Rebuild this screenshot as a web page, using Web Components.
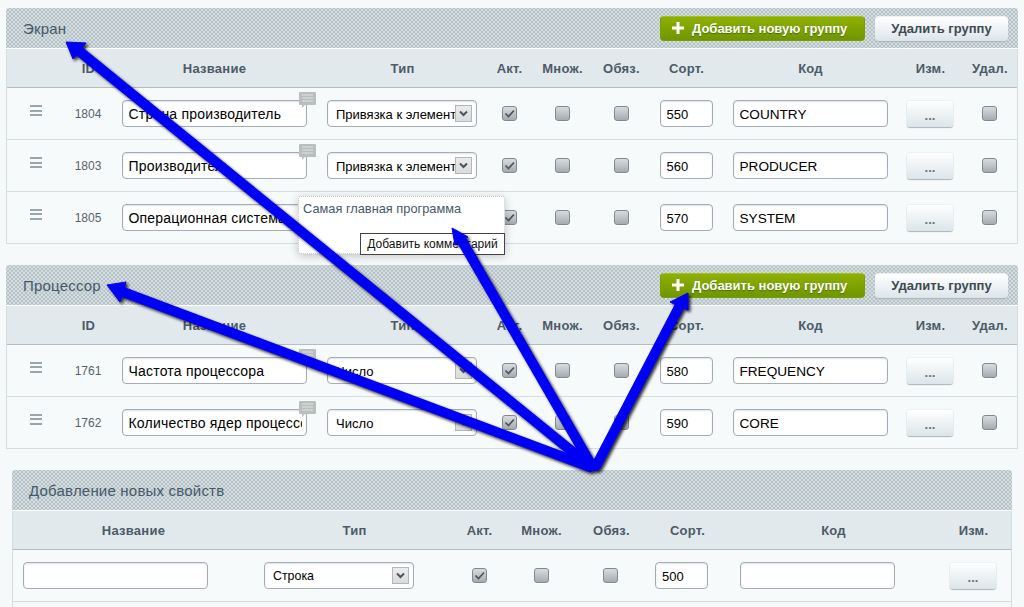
<!DOCTYPE html>
<html lang="ru"><head><meta charset="utf-8"><title>Свойства</title>
<style>
html,body{margin:0;height:607px;overflow:hidden;background:#f5f9fa;font-family:"Liberation Sans",Arial,sans-serif}
body{position:relative;padding:8px 6px 0;box-sizing:border-box;
--c1:58px 46px 206px 170px 44px 62px 56px 74px 174px 66px 53px;
--c2:205px 242px 38px 86px 52px 91px 180px 104px;
--h2:240px 202px 48px 76px 64px 88px 204px 76px}
</style></head><body>
<prop-group title-text="Экран" style="--cols:var(--c1)">
  <prop-btn slot="actions" kind="add">Добавить новую группу</prop-btn>
  <prop-btn slot="actions">Удалить группу</prop-btn>
  <prop-head><span></span><span>ID</span><span>Название</span><span>Тип</span><span>Акт.</span><span>Множ.</span><span>Обяз.</span><span>Сорт.</span><span>Код</span><span>Изм.</span><span>Удал.</span></prop-head>
  <prop-row id-text="1804" name="Страна производитель" type="Привязка к элементам" active sort="550" code="COUNTRY"></prop-row>
  <prop-row id-text="1803" name="Производитель" type="Привязка к элементам" active sort="560" code="PRODUCER"></prop-row>
  <prop-row id-text="1805" name="Операционная система" type="" active sort="570" code="SYSTEM" popup></prop-row>
</prop-group>
<prop-group title-text="Процессор" style="--cols:var(--c1)">
  <prop-btn slot="actions" kind="add">Добавить новую группу</prop-btn>
  <prop-btn slot="actions">Удалить группу</prop-btn>
  <prop-head><span></span><span>ID</span><span>Название</span><span>Тип</span><span>Акт.</span><span>Множ.</span><span>Обяз.</span><span>Сорт.</span><span>Код</span><span>Изм.</span><span>Удал.</span></prop-head>
  <prop-row id-text="1761" name="Частота процессора" type="Число" active sort="580" code="FREQUENCY"></prop-row>
  <prop-row id-text="1762" name="Количество ядер процессора" type="Число" active sort="590" code="CORE"></prop-row>
</prop-group>
<prop-group title-text="Добавление новых свойств" style="--cols:var(--c2);margin:0 6px">
  <prop-head style="--cols:var(--h2)"><span>Название</span><span>Тип</span><span>Акт.</span><span>Множ.</span><span>Обяз.</span><span>Сорт.</span><span>Код</span><span>Изм.</span></prop-head>
  <prop-row new type="Строка" active sort="500" style="--sel:12.4px"></prop-row>
  <prop-row new blank></prop-row>
</prop-group>
<prop-arrows></prop-arrows>
<script>
const def=(n,html,init)=>customElements.define(n,class extends HTMLElement{
  connectedCallback(){if(this.shadowRoot)return;const r=this.attachShadow({mode:'open'});r.innerHTML=typeof html==='function'?html(this):html;init&&init(r,this);}
});
const esc=s=>String(s||'').replace(/&/g,'&amp;').replace(/"/g,'&quot;').replace(/</g,'&lt;');
def('prop-group',h=>`<style>
:host{display:block;margin-bottom:21px;position:relative}
:host(:last-of-type){margin-bottom:0}
.top{height:40px;display:flex;align-items:center;justify-content:space-between;padding:0 10px 0 17px;border-radius:3px 3px 0 0;
background-color:#d3dcdf;background-image:radial-gradient(circle,#b8c3c8 .8px,transparent 1.1px),radial-gradient(circle,#b8c3c8 .8px,transparent 1.1px);background-size:4px 4px;background-position:0 0,2px 2px;border-bottom:1px solid #fff;
font:15px "Liberation Sans",Arial,sans-serif;letter-spacing:.2px;color:#46596a}
.top span{padding-top:1px}
.act{display:flex;gap:10px;letter-spacing:0}
.body{border:solid #d5dde0;border-width:0 1px}
</style><div class="top"><span>${esc(h.getAttribute('title-text'))}</span><div class="act"><slot name="actions"></slot></div></div><div class="body"><slot></slot></div>`);
def('prop-head',`<style>
:host{display:grid;grid-template-columns:var(--cols);height:38px;align-items:center;text-align:center;background:#e2e9ec;border-bottom:1px solid #b4bdc2;
font:bold 13px "Liberation Sans",Arial,sans-serif;letter-spacing:.25px;color:#4c5a68}
span,::slotted(span){padding-left:1px}
</style><slot></slot>`);
def('prop-btn',h=>{const add=h.getAttribute('kind')==='add';return `<style>
:host{display:block}
.b{height:25px;box-sizing:border-box;display:flex;align-items:center;border-radius:4px;font:bold 13px "Liberation Sans",Arial,sans-serif;white-space:nowrap}
.add{width:205px;padding-left:11px;gap:8px;color:#fff;background:linear-gradient(#8fb000,#6e9600);border:1px solid #7a9d00;border-top-color:#a3c21a;text-shadow:0 1px 1px #4f6b00}
.del{width:133px;justify-content:center;color:#3d4a50;background:linear-gradient(#fff,#dde5e9);box-shadow:0 1px 1px #aab4b8;border-top:1px solid #eef2f3}
svg{flex:none}
</style><div class="b ${add?'add':'del'}">${add?'<svg width="12" height="12" viewBox="0 0 12 12"><path d="M4.5 0h3v4.500H12v3H7.500V12h-3V7.500H0v-3h4.500z" fill="#fff"/></svg>':''}<slot></slot></div>`});
def('prop-input',`<style>
:host{display:block;box-sizing:border-box;height:27px;background:#fff;border:1px solid #a4adb6;border-radius:4px;box-shadow:inset 0 1px 2px #dfe3e6;
font:var(--fs,13px)/27px "Liberation Sans",Arial,sans-serif;letter-spacing:var(--ls,0);color:#000;padding:0 4px 0 6px;white-space:nowrap;text-align:left}
.t{overflow:hidden;height:25px}
</style><div class="t"><slot></slot></div>`);
def('prop-select',`<style>
:host{display:flex;align-items:center;box-sizing:border-box;width:150px;height:27px;background:#fff;border:1px solid #a4adb6;border-radius:4px;box-shadow:inset 0 1px 2px #dfe3e6;
font:var(--sel,13px)/27px "Liberation Sans",Arial,sans-serif;color:#000;padding:0 4px 0 8px;text-align:left;white-space:nowrap}
.t{flex:1;overflow:hidden;min-width:0;height:25px}
.a{flex:none;width:17px;height:17px;box-sizing:border-box;border:1px solid #b4b6b8;background:linear-gradient(#e9ebec,#d9dcde);display:flex;align-items:center;justify-content:center}
</style><div class="t"><slot></slot></div><div class="a"><svg width="9" height="7" viewBox="0 0 9 7"><path d="M1 1.500 4.500 5 8 1.500" fill="none" stroke="#4d5358" stroke-width="2"/></svg></div>`);
def('prop-check',h=>`<style>
:host{display:block;box-sizing:border-box;width:15px;height:15px;border:1px solid #7f8a90;border-radius:3px;background:linear-gradient(#d9dcdf,#a6abb0);box-shadow:0 1px 0 #fff}
svg{display:block}
</style>${h.hasAttribute('on')?'<svg width="13" height="13" viewBox="0 0 13 13"><path d="M2.500 6.500 5.500 9.500 11 3.500" fill="none" stroke="#4a5258" stroke-width="1.600"/></svg>':''}`);
def('prop-dots',`<style>
:host{display:block;box-sizing:border-box;width:46px;height:26px;border-radius:3px;background:linear-gradient(#fff,#dce5e9);box-shadow:0 1px 1px #aab4b8,0 0 0 1px #eef2f3;text-align:center;
font:bold 13px/29px "Liberation Sans",Arial,sans-serif;color:#667378}
</style>...`);
def('prop-grip',`<style>
:host{display:block;width:12px;height:11px;margin-bottom:7px;background:linear-gradient(#9aa6ab 2px,transparent 2px 4.500px,#9aa6ab 4.500px 6.500px,transparent 6.500px 9px,#9aa6ab 9px 11px)}
</style>`);
def('prop-bubble',`<style>
:host{position:absolute;left:188px;top:4px;display:block;width:17px;height:16px}
</style><svg width="17" height="16" viewBox="0 0 17 16"><path d="M1 0h15a1 1 0 0 1 1 1v11a1 1 0 0 1-1 1H6l-3 3v-3H1a1 1 0 0 1-1-1V1a1 1 0 0 1 1-1z" fill="#b9bfbc"/><path d="M3 3h11M3 6h11M3 9h11" stroke="#dfe3e1" stroke-width="1.200"/></svg>`);
def('prop-popup',`<style>
:host{position:absolute;left:187px;top:4px;z-index:5;display:block;box-sizing:border-box;width:207px;height:58px;background:#fff;border:1px dotted #b8c6c8;border-radius:3px;box-shadow:0 2px 10px rgba(0,0,0,.22);
font:12.800px/1 "Liberation Sans",Arial,sans-serif;color:#46596a;padding:6px 4px;text-align:left;white-space:nowrap}
.tip{position:absolute;right:-1px;bottom:-2px;width:145px;height:22px;box-sizing:border-box;background:#fff;border:1px solid #444;font:12px/20px "Liberation Sans",Arial,sans-serif;color:#111;text-align:center}
</style><slot></slot><div class="tip">Добавить комментарий</div>`);
def('prop-row',h=>{
  const g=a=>h.getAttribute(a)||'', nw=h.hasAttribute('new');
  if(h.hasAttribute('blank'))return `<style>:host{display:block;height:5px}</style>`;
  const c=s=>`<div class="c">${s}</div>`;
  const name=c(`<prop-input style="width:185px;--fs:14px;--ls:.2px">${esc(g('name'))}</prop-input>`+(nw?'':h.hasAttribute('popup')?'<prop-popup>Самая главная программа</prop-popup>':'<prop-bubble></prop-bubble>'));
  const rest=c(`<prop-select>${esc(g('type'))}</prop-select>`)+c(`<prop-check ${h.hasAttribute('active')?'on':''}></prop-check>`)+c('<prop-check></prop-check>')+c('<prop-check></prop-check>')
   +c(`<prop-input style="width:53px">${esc(g('sort'))}</prop-input>`)+c(`<prop-input style="width:155px;--fs:13.600px">${esc(g('code'))}</prop-input>`);
  const cells=nw?name+rest+`<div class="c" style="padding-left:28px"><prop-dots></prop-dots></div>`
    :c('<prop-grip></prop-grip>')+c(`<span class="id">${esc(g('id-text'))}</span>`)+name+rest+c('<prop-dots></prop-dots>')+c('<prop-check></prop-check>');
  return `<style>
:host{display:grid;grid-template-columns:var(--cols);height:52px;box-sizing:border-box;border-bottom:1px solid #d5dde0;background:#f7fafa;align-items:center}
.c{position:relative;display:flex;justify-content:center;align-items:center;height:100%}
.id{font:12px "Liberation Sans",Arial,sans-serif;color:#55646c}
</style>${cells}`;
});
def('prop-arrows',()=>{
 const arr=[
  ['M79 51L590 466','M66 42L86 43L73 59Z'],
  ['M123 292L590 467','M107 285L126 282L120 302Z'],
  ['M462 241L592 466','M452 228L468 237L455 245Z'],
  ['M680 305L596 466','M688 293L670 302L688 310Z']];
 return `<style>:host{position:absolute;left:0;top:0;width:1024px;height:607px;pointer-events:none;z-index:10;display:block}
 svg{display:block;filter:drop-shadow(2px 2px 1.500px rgba(0,0,0,.8))}</style>
 <svg width="1024" height="607" viewBox="0 0 1024 607">${arr.map(a=>`<path d="${a[0]}" stroke="#0000f5" stroke-width="10" stroke-linecap="round" fill="none"/><path d="${a[1]}" fill="#0000f5" stroke="#0000f5" stroke-linejoin="round"/>`).join('')}</svg>`;
});
</script>
</body></html>
